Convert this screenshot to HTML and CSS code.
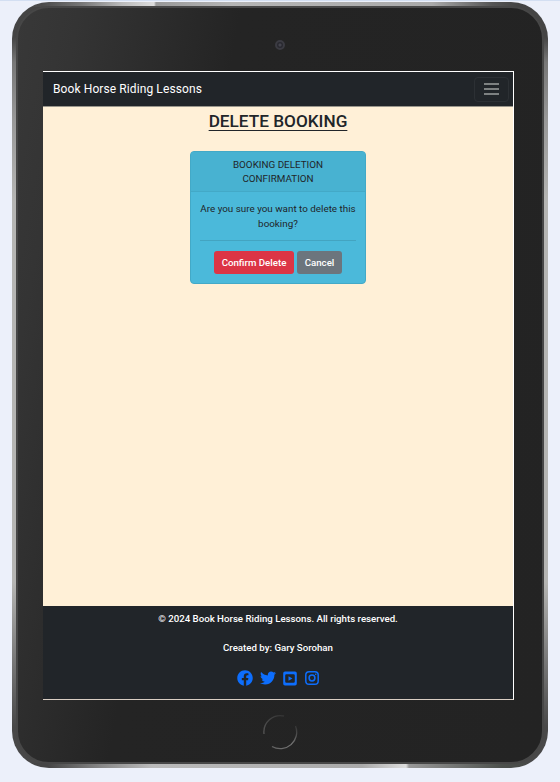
FILE: index.html
```html
<!DOCTYPE html>
<html lang="en">
<head>
<meta charset="utf-8">
<title>Delete Booking</title>
<link rel="stylesheet" href="styles.css">
</head>
<body>
<div class="device">
  <div class="bezel">
    <div class="top"><span class="camera"></span></div>
    <div class="screen">
      <nav class="navbar">
        <a class="brand">Book Horse Riding Lessons</a>
        <button class="toggler" aria-label="Toggle navigation"><i></i><i></i><i></i></button>
      </nav>
      <main>
        <h1>DELETE BOOKING</h1>
        <section class="card">
          <header>BOOKING DELETION<br>CONFIRMATION</header>
          <div class="card-body">
            <p>Are you sure you want to delete this<br>booking?</p>
            <hr>
            <div class="actions"><button class="btn danger">Confirm Delete</button><button class="btn secondary">Cancel</button></div>
          </div>
        </section>
      </main>
      <footer>
        <p>© 2024 Book Horse Riding Lessons. All rights reserved.</p>
        <p>Created by: Gary Sorohan</p>
        <div class="social">
          <svg class="fb" viewBox="0 0 512 512"><path d="M504 256C504 119 393 8 256 8S8 119 8 256c0 123.780 90.690 226.380 209.250 245V327.690h-63V256h63v-54.640c0-62.150 37-96.480 93.670-96.480 27.140 0 55.520 4.840 55.520 4.840v61h-31.280c-30.800 0-40.410 19.120-40.410 38.730V256h68.780l-11 71.690h-57.780V501C413.310 482.380 504 379.780 504 256z"/></svg>
          <svg class="tw" viewBox="0 0 512 512"><path d="M459.370 151.716c.325 4.548.325 9.097.325 13.645 0 138.720-105.583 298.558-298.558 298.558-59.452 0-114.680-17.219-161.137-47.106 8.447.974 16.568 1.299 25.340 1.299 49.055 0 94.213-16.568 130.274-44.832-46.132-.975-84.792-31.188-98.112-72.772 6.498.974 12.995 1.624 19.818 1.624 9.421 0 18.843-1.300 27.614-3.573-48.081-9.747-84.143-51.980-84.143-102.985v-1.299c13.969 7.797 30.214 12.670 47.431 13.319-28.264-18.843-46.781-51.005-46.781-87.391 0-19.492 5.197-37.360 14.294-52.954 51.655 63.675 129.300 105.258 216.365 109.807-1.624-7.797-2.599-15.918-2.599-24.040 0-57.828 46.782-104.934 104.934-104.934 30.213 0 57.502 12.670 76.670 33.137 23.715-4.548 46.456-13.320 66.599-25.340-7.798 24.366-24.366 44.833-46.132 57.827 21.117-2.273 41.584-8.122 60.426-16.243-14.292 20.791-32.161 39.308-52.628 54.253z"/></svg>
          <svg class="yt" viewBox="0 0 14 15"><path fill-rule="evenodd" d="M2 .5h10a1.800 1.800 0 0 1 1.800 1.800v10.400a1.800 1.800 0 0 1-1.800 1.800H2A1.800 1.800 0 0 1 .2 12.700V2.300A1.800 1.800 0 0 1 2 .5zM3.400 3.200Q2.200 3.200 2.200 4.500v6Q2.200 11.700 3.400 11.700h7.200q1.200 0 1.200-1.200v-6q0-1.300-1.200-1.300zM5.500 5.200l4 2.300-4 2.300z"/></svg>
          <svg class="ig" viewBox="0 0 14 14"><rect x=".8" y=".8" width="12.400" height="12.400" rx="3.300"/><circle cx="7" cy="7" r="2.900"/><circle class="dot" cx="10.700" cy="3.300" r=".8"/></svg>
        </div>
      </footer>
    </div>
    <div class="bottom">
      <svg class="home" viewBox="0 0 36 36"><defs><linearGradient id="a" x1="0" y1="1" x2="1" y2="0"><stop offset="0" stop-color="#555"/><stop offset="1" stop-color="#333"/></linearGradient><linearGradient id="b" x1="0" y1="1" x2="1" y2="0"><stop offset="0" stop-color="#606060"/><stop offset=".5" stop-color="#777"/><stop offset="1" stop-color="#333"/></linearGradient></defs><path stroke="url(#a)" d="M2 20A16.500 16.500 0 0 1 22 2"/><path stroke="url(#b)" d="M33.500 12A16.500 16.500 0 0 1 10 32.500"/></svg>
    </div>
  </div>
</div>
</body>
</html>
```
FILE: styles.css
```css
* { box-sizing: border-box; }
body {
  margin: 0;
  height: 782px;
  overflow: hidden;
  padding: 1px 0 0 12px;
  background: #ecf0fa;
  border-top: 1px solid #d3dff2;
  font-family: Roboto, "Liberation Sans", sans-serif;
  color: #212529;
}
.device {
  width: 535.500px;
  height: 765.500px;
  padding: 4px;
  border-radius: 37px;
  background:
    linear-gradient(90deg, #4a4a4a 30px, #777 70px, #bbb 110px, #ddd 142px, #999 144px, #b5b5b5 220px, #aaa 420px, #555 480px, #444 506px) 0 0 / 100% 5px no-repeat,
    linear-gradient(90deg, #454545 35px, #888 90px, #bbb 140px, #aaa 350px, #ddd 394px, #999 397px, #4c504c 490px, #444) 0 100% / 100% 5px no-repeat,
    linear-gradient(#444 35px, #777 60px, #999 120px, #b5b5b3 200px, #b5b5b3 580px, #777 660px, #484848 725px);
}
.bezel {
  height: 757.500px;
  border: 2px solid #474747;
  border-radius: 33px;
  background: linear-gradient(100deg, #383838 0, #343434 60px, #242424 220px, #232323);
  display: flex;
  flex-direction: column;
}
.top {
  height: 63px;
  display: flex;
  justify-content: center;
  padding-top: 32px;
}
.camera {
  width: 10px;
  height: 10px;
  border-radius: 50%;
  border: 2px solid #3b3b42;
  background: radial-gradient(circle, #44444d 1px, #292930 2px);
}
.screen {
  width: 471px;
  height: 629px;
  margin-left: 25px;
  border-top: 1px solid #fff;
  border-right: 1px solid #fff;
  border-bottom: 1px solid #d9cec3;
  display: flex;
  flex-direction: column;
  background: #fff0d7;
}
.navbar {
  height: 35px;
  background: #212529;
  border-bottom: 1px solid #99968c;
  display: flex;
  align-items: center;
  justify-content: space-between;
  padding: 0 4px 0 10px;
}
.brand {
  color: #fff;
  font-size: 12px;
  letter-spacing: .1px;
  white-space: nowrap;
}
.toggler {
  width: 35px;
  height: 25px;
  background: none;
  border: 1px solid #2c3034;
  border-radius: 4px;
  padding: 0;
  display: flex;
  flex-direction: column;
  align-items: center;
  justify-content: center;
  gap: 3px;
}
.toggler i { width: 15px; height: 2px; background: #7d8181; }
main {
  flex: 1;
  display: flex;
  flex-direction: column;
  align-items: center;
}
h1 {
  margin: 3px 0 0;
  font-size: 17.200px;
  line-height: 22px;
  font-weight: 500;
  text-decoration: underline;
  text-decoration-thickness: 1px;
  text-underline-offset: 3px;
}
.card {
  width: 176px;
  height: 133px;
  margin-top: 19px;
  background: #4bb9da;
  border: 1px solid #43a9c7;
  border-radius: 4px;
  font-size: 9.850px;
  text-align: center;
}
.card header {
  height: 40px;
  padding-top: 6px;
  line-height: 14px;
  background: #48b2d1;
  border-bottom: 1px solid #43a9c7;
  border-radius: 3px 3px 0 0;
}
.card-body { padding: 9px 9px; }
.card p { margin: 0; line-height: 15px; white-space: nowrap; }
hr { margin: 9px 0 10px; border: 0; border-top: 1px solid #43a4c1; }
.actions { display: flex; justify-content: center; gap: 3px; }
.btn {
  height: 23px;
  padding: 0;
  border: 0;
  border-radius: 3px;
  color: #fff;
  font: 500 9.700px Roboto, sans-serif;
}
.danger { width: 80px; background: #dc3545; }
.secondary { width: 45px; background: #6c757d; }
footer {
  height: 93px;
  background: #212529;
  color: #fff;
  display: flex;
  flex-direction: column;
  align-items: center;
  font-size: 9.680px;
  font-weight: 500;
  padding-top: 5px;
}
footer p { margin: 0 0 14px; line-height: 15px; white-space: nowrap; }
.social {
  height: 16px;
  display: flex;
  align-items: center;
  margin-top: 1px;
  fill: #0d6efd;
}
.fb { width: 16px; height: 16px; margin-right: 7px; }
.tw { width: 16px; height: 16px; margin-right: 7px; }
.yt { width: 14px; height: 15px; margin-right: 8px; }
.ig { width: 14px; height: 14px; fill: none; stroke: #0d6efd; stroke-width: 1.500; }
.ig .dot { fill: #0d6efd; stroke: none; }
.bottom { flex: 1; display: flex; justify-content: center; padding-top: 14px; }
.home { width: 36px; height: 36px; fill: none; stroke-width: 1.300; }
```
